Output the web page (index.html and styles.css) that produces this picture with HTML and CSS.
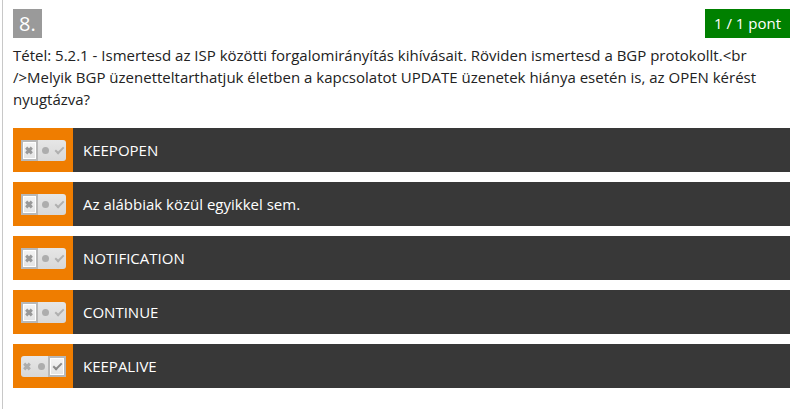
FILE: index.html
```html
<!DOCTYPE html>
<html lang="hu">
<head>
<meta charset="utf-8">
<link rel="stylesheet" href="styles.css">
</head>
<body>
<div class="question">
  <div class="head">
    <div class="num">8.</div>
    <div class="score">1 / 1 pont</div>
  </div>
  <p class="text">Tétel: 5.2.1 - Ismertesd az ISP közötti forgalomirányítás kihívásait. Röviden ismertesd a BGP protokollt.&lt;br /&gt;Melyik BGP üzenetteltarthatjuk életben a kapcsolatot UPDATE üzenetek hiánya esetén is, az OPEN kérést nyugtázva?</p>
  <div class="answers">
    <div class="answer">
      <div class="side"><div class="toggle sel-no"><span class="ic no"></span><span class="ic mid"></span><span class="ic yes"></span></div></div>
      <div class="label">KEEPOPEN</div>
    </div>
    <div class="answer">
      <div class="side"><div class="toggle sel-no"><span class="ic no"></span><span class="ic mid"></span><span class="ic yes"></span></div></div>
      <div class="label">Az alábbiak közül egyikkel sem.</div>
    </div>
    <div class="answer">
      <div class="side"><div class="toggle sel-no"><span class="ic no"></span><span class="ic mid"></span><span class="ic yes"></span></div></div>
      <div class="label">NOTIFICATION</div>
    </div>
    <div class="answer">
      <div class="side"><div class="toggle sel-no"><span class="ic no"></span><span class="ic mid"></span><span class="ic yes"></span></div></div>
      <div class="label">CONTINUE</div>
    </div>
    <div class="answer">
      <div class="side"><div class="toggle sel-yes"><span class="ic no"></span><span class="ic mid"></span><span class="ic yes"></span></div></div>
      <div class="label">KEEPALIVE</div>
    </div>
  </div>
</div>
</body>
</html>
```
FILE: styles.css
```css
html, body {
  margin: 0;
  padding: 0;
  background: #fff;
}
body {
  font-family: "Open Sans", "Liberation Sans", sans-serif;
  color: #222;
}
.question {
  margin-left: 2px;
  border-left: 1px solid #c8c8c8;
  padding: 9px 9px 20px 10px;
  min-height: 380px;
}
.head {
  display: flex;
  justify-content: space-between;
  align-items: flex-start;
}
.num {
  background: #9a9a9a;
  color: #fff;
  font-size: 20px;
  width: 29px;
  height: 29px;
  line-height: 30px;
  box-sizing: border-box;
  padding-left: 6px;
}
.score {
  background: #008000;
  color: #fff;
  font-size: 15px;
  height: 29px;
  line-height: 29px;
  padding: 0 9px;
}
.text {
  margin: 6px 0 18px;
  font-size: 15px;
  line-height: 22px;
}
.answers {
  display: flex;
  flex-direction: column;
  gap: 10px;
}
.answer {
  display: flex;
  height: 44px;
  background: #383838;
}
.side {
  width: 60px;
  background: #ef7d00;
  display: flex;
  align-items: center;
  justify-content: center;
}
.label {
  color: #fff;
  font-size: 15px;
  display: flex;
  align-items: center;
  padding-left: 10px;
}
.toggle {
  width: 45px;
  height: 21px;
  border-radius: 3px;
  background: linear-gradient(#e6e6e6, #d8d8d8);
  display: flex;
  position: relative;
}
.ic {
  flex: 1;
  position: relative;
  box-sizing: border-box;
}
.sel-no .no, .sel-yes .yes {
  background: linear-gradient(#f4f4f4, #e4e4e4);
  border: 2px solid #b8b8b8;
  box-shadow: inset 0 0 0 1px #fff;
}
.no::before, .no::after {
  content: "";
  position: absolute;
  left: 50%;
  top: 50%;
  width: 8px;
  height: 3px;
  margin: -1.5px 0 0 -4px;
  background: #adadad;
  transform: rotate(45deg);
}
.no::after { transform: rotate(-45deg); }
.mid::before {
  content: "";
  position: absolute;
  left: 50%;
  top: 50%;
  width: 7px;
  height: 7px;
  margin: -3.5px 0 0 -3.5px;
  border-radius: 50%;
  background: #adadad;
}
.yes::before {
  content: "";
  position: absolute;
  left: 50%;
  top: 50%;
  width: 7px;
  height: 3px;
  margin: -3px 0 0 -4px;
  border-left: 2px solid #b0b0b0;
  border-bottom: 2px solid #b0b0b0;
  transform: rotate(-45deg);
  box-sizing: content-box;
}
.sel-no .no::before, .sel-no .no::after { background: #999; }
.sel-yes .yes::before { border-color: #8a8a8a; }
```
